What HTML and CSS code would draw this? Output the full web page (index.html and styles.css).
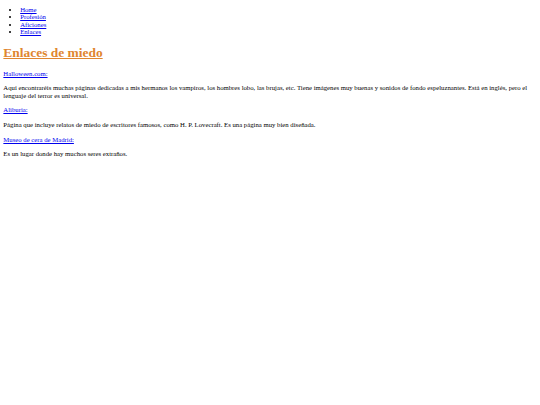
FILE: index.html
```html
<!DOCTYPE html>
<html lang="es">
<head>
<meta charset="utf-8">
<title>Enlaces de miedo</title>
<link rel="stylesheet" href="styles.css">
</head>
<body>
<ul class="menu">
<li><a href="#">Home</a></li>
<li><a href="#">Profesión</a></li>
<li><a href="#">Aficiones</a></li>
<li><a href="#">Enlaces</a></li>
</ul>
<h1 class="title">Enlaces de miedo</h1>
<p><a href="#">Halloween.com:</a></p>
<p>Aquí encontraréis muchas páginas dedicadas a mis hermanos los vampiros, los hombres lobo, las brujas, etc. Tiene imágenes muy buenas y sonidos de fondo espeluznantes. Está en inglés, pero el lenguaje del terror es universal.</p>
<p><a href="#">Aliburia:</a></p>
<p>Página que incluye relatos de miedo de escritores famosos, como H. P. Lovecraft. Es una página muy bien diseñada.</p>
<p><a href="#">Museo de cera de Madrid:</a></p>
<p>Es un lugar donde hay muchos seres extraños.</p>
</body>
</html>
```
FILE: styles.css
```css
html { background: #fff; }
body {
  margin: 0.5em;
  font-family: "Liberation Serif", "Times New Roman", serif;
  font-size: 6.72px;
  line-height: 7.5px;
  color: #000;
}
a { color: #0000ee; }
.menu {
  margin: 0.35em 0 1em;
  padding-left: 2.5em;
}
.title {
  font-size: 2em;
  line-height: 1.15;
  margin: 0.72em 0 0.67em;
  color: #e0862f;
  text-decoration: underline;
}
p { margin: 1.05em 0; }
```
